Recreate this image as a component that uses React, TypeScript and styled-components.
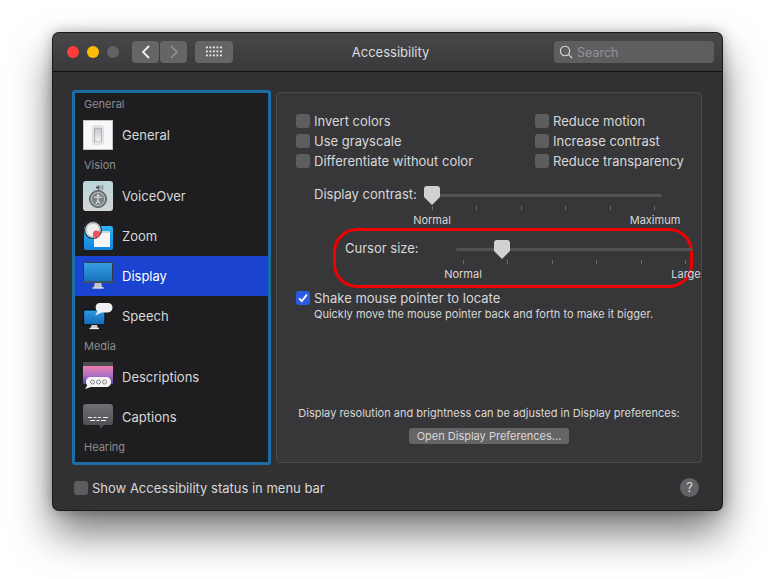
import { ReactNode } from 'react';
import styled, { createGlobalStyle } from 'styled-components';

const GlobalStyle = createGlobalStyle`
  html, body {
    margin: 0;
    background: #fff;
  }
  * {
    box-sizing: border-box;
  }
`;

function GeneralIcon() {
  return (
    <svg width="30" height="30" viewBox="0 0 30 30">
      <rect x="0.5" y="0.5" width="29" height="29" fill="#f8f8fa" stroke="#c4c4c6" />
      <rect x="10" y="6" width="10" height="18" rx="1" fill="#fff" stroke="#c8c8ca" />
      <defs>
        <linearGradient id="sw" x1="0" y1="0" x2="0" y2="1">
          <stop offset="0" stopColor="#c6c8cc" />
          <stop offset="1" stopColor="#f2f2f4" />
        </linearGradient>
      </defs>
      <rect x="11.5" y="8" width="7" height="14" fill="url(#sw)" stroke="#8c8c8e" strokeWidth="0.6" />
    </svg>
  );
}

function VoiceOverIcon() {
  return (
    <svg width="30" height="30" viewBox="0 0 30 30">
      <defs>
        <linearGradient id="vo" x1="0" y1="0" x2="0" y2="1">
          <stop offset="0" stopColor="#bcd6da" />
          <stop offset="1" stopColor="#d2d6d6" />
        </linearGradient>
      </defs>
      <rect x="0" y="0" width="30" height="30" rx="3" fill="url(#vo)" />
      <circle cx="15" cy="18" r="8.5" fill="#7d8484" stroke="#50585a" />
      <circle cx="15" cy="18" r="6.6" fill="none" stroke="#c4cccc" strokeWidth="0.8" />
      <circle cx="15" cy="14.4" r="1.2" fill="#dde2e2" />
      <path d="M11 16.2h8M15 16.2v3.4M15 19.6l-2 3.2M15 19.6l2 3.2" stroke="#dde2e2" strokeWidth="1.1" fill="none" />
      <path d="M13 5.5h1.4l2-1.7v5.4l-2-1.7H13z" fill="#51595b" />
      <path d="M17.6 5c.7.8.7 2.200 0 3M19 4c1.200 1.400 1.200 3.600 0 5" stroke="#51595b" strokeWidth="0.7" fill="none" />
    </svg>
  );
}

function ZoomIcon() {
  return (
    <svg width="30" height="30" viewBox="0 0 30 30">
      <defs>
        <linearGradient id="zm" x1="0" y1="0" x2="0" y2="1">
          <stop offset="0" stopColor="#2ab4f4" />
          <stop offset="1" stopColor="#1284dc" />
        </linearGradient>
      </defs>
      <rect x="1" y="5" width="29" height="24" rx="2" fill="url(#zm)" />
      <rect x="11" y="10" width="16" height="16" fill="#f6f6f8" />
      <rect x="11" y="10" width="16" height="2" fill="#d4d4d8" />
      <circle cx="10" cy="9" r="8.4" fill="#eef0f2" stroke="#34383c" strokeWidth="1.4" />
      <circle cx="10" cy="9" r="6.6" fill="none" stroke="#a8acb0" strokeWidth="0.8" />
      <circle cx="13.500" cy="13" r="3.6" fill="#ee5060" />
    </svg>
  );
}

function DisplayIcon() {
  return (
    <svg width="32" height="30" viewBox="0 0 32 30">
      <defs>
        <linearGradient id="dp" x1="0" y1="0" x2="0" y2="1">
          <stop offset="0" stopColor="#39a0e4" />
          <stop offset="1" stopColor="#1470b8" />
        </linearGradient>
      </defs>
      <rect x="0.500" y="0.500" width="31" height="21" rx="1" fill="url(#dp)" stroke="#33363a" />
      <rect x="0" y="21" width="32" height="1.500" fill="#4a4e52" />
      <path d="M12.500 22.500h7l1 5h-9z" fill="#c2c4c8" />
      <rect x="10" y="27" width="12" height="1.500" fill="#e4e4e6" />
    </svg>
  );
}

function SpeechIcon() {
  return (
    <svg width="32" height="30" viewBox="0 0 32 30">
      <defs>
        <linearGradient id="sp" x1="0" y1="0" x2="0" y2="1">
          <stop offset="0" stopColor="#2f9ae4" />
          <stop offset="1" stopColor="#1468b4" />
        </linearGradient>
      </defs>
      <rect x="0.500" y="8.500" width="23" height="16" rx="1" fill="url(#sp)" stroke="#0c0c0e" strokeWidth="1.400" />
      <path d="M9 24.500h6l.6 3.500H8.400z" fill="#c8c8cc" />
      <rect x="7" y="27.500" width="10" height="1.500" fill="#f0f0f2" />
      <path d="M18 1h8.500c3 0 5 1.800 5 5s-2 5.200-5 5.200h-6.500l-7 3.300 2.400-4.600c-1.300-1-1.900-2.300-1.900-3.900 0-3.200 1.500-5 4.500-5z" fill="#f0f0f2" />
    </svg>
  );
}

function DescriptionsIcon() {
  return (
    <svg width="30" height="30" viewBox="0 0 30 30">
      <defs>
        <linearGradient id="ds" x1="0" y1="0" x2="0" y2="1">
          <stop offset="0" stopColor="#ec7eac" />
          <stop offset="0.5" stopColor="#b272c4" />
          <stop offset="1" stopColor="#5a3fb0" />
        </linearGradient>
      </defs>
      <rect x="0" y="0" width="30" height="4" fill="#4a4a4c" />
      <rect x="0" y="4" width="30" height="18" fill="url(#ds)" />
      <path d="M8 15h15c3 0 5 2 5 5s-2 5-5 5H8l-6 2 2.200-3.600C3.400 22.500 3 21.300 3 20c0-3 2-5 5-5z" fill="#f4f4f6" />
      <circle cx="9.500" cy="20" r="2" fill="none" stroke="#7a7a7e" strokeWidth="0.9" />
      <circle cx="15.500" cy="20" r="2" fill="none" stroke="#7a7a7e" strokeWidth="0.9" />
      <circle cx="21.500" cy="20" r="2" fill="none" stroke="#7a7a7e" strokeWidth="0.9" />
    </svg>
  );
}

function CaptionsIcon() {
  return (
    <svg width="30" height="26" viewBox="0 0 30 26">
      <defs>
        <linearGradient id="cp" x1="0" y1="0" x2="0" y2="1">
          <stop offset="0" stopColor="#707074" />
          <stop offset="1" stopColor="#4a4a4e" />
        </linearGradient>
      </defs>
      <path d="M3 0h24a3 3 0 0 1 3 3v15a3 3 0 0 1-3 3H21l-3.500 4-1-4H3a3 3 0 0 1-3-3V3a3 3 0 0 1 3-3z" fill="url(#cp)" />
      <path d="M5 13.500h4M10.500 13.500h3M15 13.500h3M20 13.500h5M7 16.500h5M13.500 16.500h3M18 16.500h5" stroke="#f0f0f2" strokeWidth="1" fill="none" />
    </svg>
  );
}

const sections: { title: string; items: { label: string; icon?: ReactNode; active?: boolean }[] }[] = [
  { title: 'General', items: [{ label: 'General', icon: <GeneralIcon /> }] },
  {
    title: 'Vision',
    items: [
      { label: 'VoiceOver', icon: <VoiceOverIcon /> },
      { label: 'Zoom', icon: <ZoomIcon /> },
      { label: 'Display', icon: <DisplayIcon />, active: true },
      { label: 'Speech', icon: <SpeechIcon /> },
    ],
  },
  {
    title: 'Media',
    items: [
      { label: 'Descriptions', icon: <DescriptionsIcon /> },
      { label: 'Captions', icon: <CaptionsIcon /> },
    ],
  },
  { title: 'Hearing', items: [] },
];

function Check({ label, checked }: { label: string; checked?: boolean }) {
  return (
    <CheckRow>
      <CheckBox $checked={checked}>
        {checked && (
          <svg width="14" height="14" viewBox="0 0 14 14">
            <path d="M3.200 7.400l2.600 2.800 5-6.600" stroke="#fff" strokeWidth="1.800" fill="none" />
          </svg>
        )}
      </CheckBox>
      {label}
    </CheckRow>
  );
}

function Slider({ label, value, right }: { label: string; value: number; right: string; ticks?: number }) {
  return (
    <SliderGrid>
      <SliderLabel>{label}</SliderLabel>
      <TrackArea>
        <Track />
        <Thumb style={{ left: value }}>
          <svg width="16" height="19" viewBox="0 0 16 19">
            <path d="M3 0h10a3 3 0 0 1 3 3v8l-8 8-8-8V3a3 3 0 0 1 3-3z" fill="#d0d0d0" />
          </svg>
        </Thumb>
        <Ticks>
          {Array.from({ length: 6 }, (_, i) => (
            <Tick key={i} />
          ))}
        </Ticks>
        <Scale>
          <ScaleText>Normal</ScaleText>
          <ScaleText>{right}</ScaleText>
        </Scale>
      </TrackArea>
    </SliderGrid>
  );
}

export default function App() {
  return (
    <Page>
      <GlobalStyle />
      <Window>
        <TitleBar>
          <TitleLeft>
            <Light $color="#fc3d39" />
            <Light $color="#fdbc08" />
            <Light $color="#626264" />
            <NavGroup>
              <NavButton>
                <svg width="12" height="14" viewBox="0 0 12 14">
                  <path d="M9 1L3 7l6 6" stroke="#f2f2f2" strokeWidth="1.800" fill="none" />
                </svg>
              </NavButton>
              <NavButton>
                <svg width="12" height="14" viewBox="0 0 12 14">
                  <path d="M3 1l6 6-6 6" stroke="#8c8c8e" strokeWidth="1.800" fill="none" />
                </svg>
              </NavButton>
            </NavGroup>
            <GridButton>
              <svg width="16" height="12" viewBox="0 0 16 12" fill="#f0f0f0">
                {[0, 4, 8].flatMap((y) =>
                  [0, 3.500, 7, 10.500, 14].map((x) => <rect key={`${x}-${y}`} x={x} y={y + 0.500} width="1.800" height="1.800" />),
                )}
              </svg>
            </GridButton>
          </TitleLeft>
          <Title>Accessibility</Title>
          <SearchBox>
            <svg width="14" height="14" viewBox="0 0 14 14">
              <circle cx="6" cy="6" r="4.700" stroke="#dcdcdc" strokeWidth="1.100" fill="none" />
              <path d="M9.500 9.500l3.700 3.700" stroke="#dcdcdc" strokeWidth="1.100" />
            </svg>
            <span>Search</span>
          </SearchBox>
        </TitleBar>
        <Body>
          <Main>
            <Sidebar>
              {sections.map((section) => (
                <div key={section.title}>
                  <SectionTitle>{section.title}</SectionTitle>
                  {section.items.map((item) => (
                    <NavItem key={item.label} $active={item.active}>
                      <IconSlot>{item.icon}</IconSlot>
                      {item.label}
                    </NavItem>
                  ))}
                </div>
              ))}
            </Sidebar>
            <Panel>
              <Options>
                <Check label="Invert colors" />
                <Check label="Reduce motion" />
                <Check label="Use grayscale" />
                <Check label="Increase contrast" />
                <Check label="Differentiate without color" />
                <Check label="Reduce transparency" />
              </Options>
              <ContrastRow>
                <Slider label="Display contrast:" value={-1} right="Maximum" />
              </ContrastRow>
              <Highlight>
                <Slider label="Cursor size:" value={38} right="Large" />
              </Highlight>
              <ShakeRow>
                <Check label="Shake mouse pointer to locate" checked />
                <Hint>Quickly move the mouse pointer back and forth to make it bigger.</Hint>
              </ShakeRow>
              <PanelFoot>
                <FootText>Display resolution and brightness can be adjusted in Display preferences:</FootText>
                <OpenButton>Open Display Preferences...</OpenButton>
              </PanelFoot>
            </Panel>
          </Main>
          <Footer>
            <Check label="Show Accessibility status in menu bar" />
            <Help>?</Help>
          </Footer>
        </Body>
      </Window>
    </Page>
  );
}

const Page = styled.div`
  width: 775px;
  height: 579px;
  padding: 33px 53px 0;
  overflow: hidden;
  font-family: Inter, 'Liberation Sans', sans-serif;
  color: #d8d8d8;
  background: #fff;
`;

const Window = styled.div`
  width: 669px;
  height: 477px;
  display: flex;
  flex-direction: column;
  background: #313133;
  border-radius: 6px;
  overflow: hidden;
  box-shadow: 0 0 0 1px #1a1a1a, 0 22px 42px rgba(0, 0, 0, 0.55), 0 0 14px rgba(0, 0, 0, 0.3);
`;

const TitleBar = styled.div`
  height: 39px;
  flex: none;
  display: grid;
  grid-template-columns: 1fr auto 1fr;
  align-items: center;
  padding: 0 8px 0 14px;
  background: linear-gradient(#48484a, #39393b);
  border-bottom: 1px solid #0e0e0e;
`;

const TitleLeft = styled.div`
  display: flex;
  align-items: center;
`;

const Light = styled.span<{ $color: string }>`
  width: 12px;
  height: 12px;
  margin-right: 8px;
  border-radius: 50%;
  background: ${(p) => p.$color};
`;

const NavGroup = styled.div`
  display: flex;
  gap: 1px;
  margin-left: 5px;
`;

const NavButton = styled.div`
  width: 27px;
  height: 22px;
  display: flex;
  align-items: center;
  justify-content: center;
  border-radius: 4px;
  background: #656567;
`;

const GridButton = styled(NavButton)`
  width: 38px;
  margin-left: 8px;
`;

const Title = styled.div`
  font-size: 13px;
  color: #dcdcdc;
`;

const SearchBox = styled.div`
  justify-self: end;
  width: 160px;
  height: 22px;
  display: flex;
  align-items: center;
  gap: 4px;
  padding-left: 5px;
  border-radius: 4px;
  background: #5e5e61;
  font-size: 12.500px;
  color: #929295;
`;

const Body = styled.div`
  flex: 1;
  display: flex;
  flex-direction: column;
  padding: 18px 20px 0 19px;
`;

const Main = styled.div`
  display: flex;
  gap: 5px;
  height: 375px;
`;

const Sidebar = styled.div`
  width: 199px;
  flex: none;
  padding-top: 1px;
  background: #1e1e20;
  border: 3px solid #1b6ea5;
  border-radius: 3px;
  overflow: hidden;
`;

const SectionTitle = styled.div`
  height: 21px;
  line-height: 21px;
  padding-left: 9px;
  font-size: 11px;
  color: #8c8c8e;
`;

const NavItem = styled.div<{ $active?: boolean }>`
  height: 40px;
  display: flex;
  align-items: center;
  gap: 9px;
  padding-left: 8px;
  font-size: 13px;
  color: ${(p) => (p.$active ? '#fff' : '#d8d8d8')};
  background: ${(p) => (p.$active ? '#1a44d0' : 'transparent')};
`;

const IconSlot = styled.div`
  width: 30px;
  height: 30px;
  display: flex;
  align-items: center;
  justify-content: center;
`;

const Panel = styled.div`
  width: 426px;
  height: 371px;
  margin-top: 2px;
  display: flex;
  flex-direction: column;
  padding: 18px 19px 18px 19px;
  background: #373739;
  border: 1px solid #4c4c4e;
  border-radius: 4px;
`;

const Options = styled.div`
  display: grid;
  grid-template-columns: 239px 1fr;
  row-gap: 0;
`;

const CheckRow = styled.div`
  height: 20px;
  display: flex;
  align-items: center;
  gap: 4px;
  font-size: 13px;
  white-space: nowrap;
`;

const CheckBox = styled.span<{ $checked?: boolean }>`
  width: 14px;
  height: 14px;
  flex: none;
  display: flex;
  border-radius: 3px;
  background: ${(p) => (p.$checked ? '#2a5ce0' : '#5d5d60')};
`;

const ContrastRow = styled.div`
  margin-top: 15px;
  padding-left: 18px;
`;

const Highlight = styled.div`
  width: 360px;
  height: 60px;
  margin: 2px 0 0 37px;
  padding: 9px 0 0 9px;
  border: 3px solid #f00000;
  border-radius: 24px;
`;

const SliderGrid = styled.div`
  display: flex;
  justify-content: space-between;
  width: 348px;
`;

const SliderLabel = styled.div`
  font-size: 13px;
  line-height: 16px;
  white-space: nowrap;
`;

const TrackArea = styled.div`
  position: relative;
  width: 237px;
  height: 40px;
  flex: none;
`;

const Track = styled.div`
  margin-top: 8px;
  height: 3px;
  border-radius: 2px;
  background: #525254;
`;

const Thumb = styled.div`
  position: absolute;
  top: 0;
  line-height: 0;
`;

const Ticks = styled.div`
  display: flex;
  justify-content: space-between;
  margin: 9px 7px 0;
`;

const Tick = styled.span`
  width: 1px;
  height: 4px;
  background: #6c6c6e;
`;

const Scale = styled.div`
  display: flex;
  justify-content: space-between;
  margin: 3px -33px 0;
`;

const ScaleText = styled.span`
  width: 80px;
  text-align: center;
  font-size: 11px;
  line-height: 14px;
`;

const ShakeRow = styled.div`
  margin-top: 0;
`;

const Hint = styled.div`
  margin: -1px 0 0 18px;
  font-size: 11px;
  line-height: 14px;
  white-space: nowrap;
`;

const PanelFoot = styled.div`
  margin-top: auto;
  display: flex;
  flex-direction: column;
  align-items: center;
  gap: 8px;
`;

const FootText = styled.div`
  font-size: 11px;
  line-height: 14px;
  white-space: nowrap;
`;

const OpenButton = styled.div`
  width: 160px;
  height: 16px;
  line-height: 16px;
  text-align: center;
  border-radius: 3px;
  background: #656567;
  font-size: 11px;
`;

const Footer = styled.div`
  flex: 1;
  display: flex;
  align-items: center;
  justify-content: space-between;
  padding: 0 3px 0 2px;
`;

const Help = styled.div`
  width: 19px;
  height: 19px;
  line-height: 19px;
  text-align: center;
  border-radius: 50%;
  background: #636366;
  font-size: 13px;
  color: #dcdcdc;
`;
